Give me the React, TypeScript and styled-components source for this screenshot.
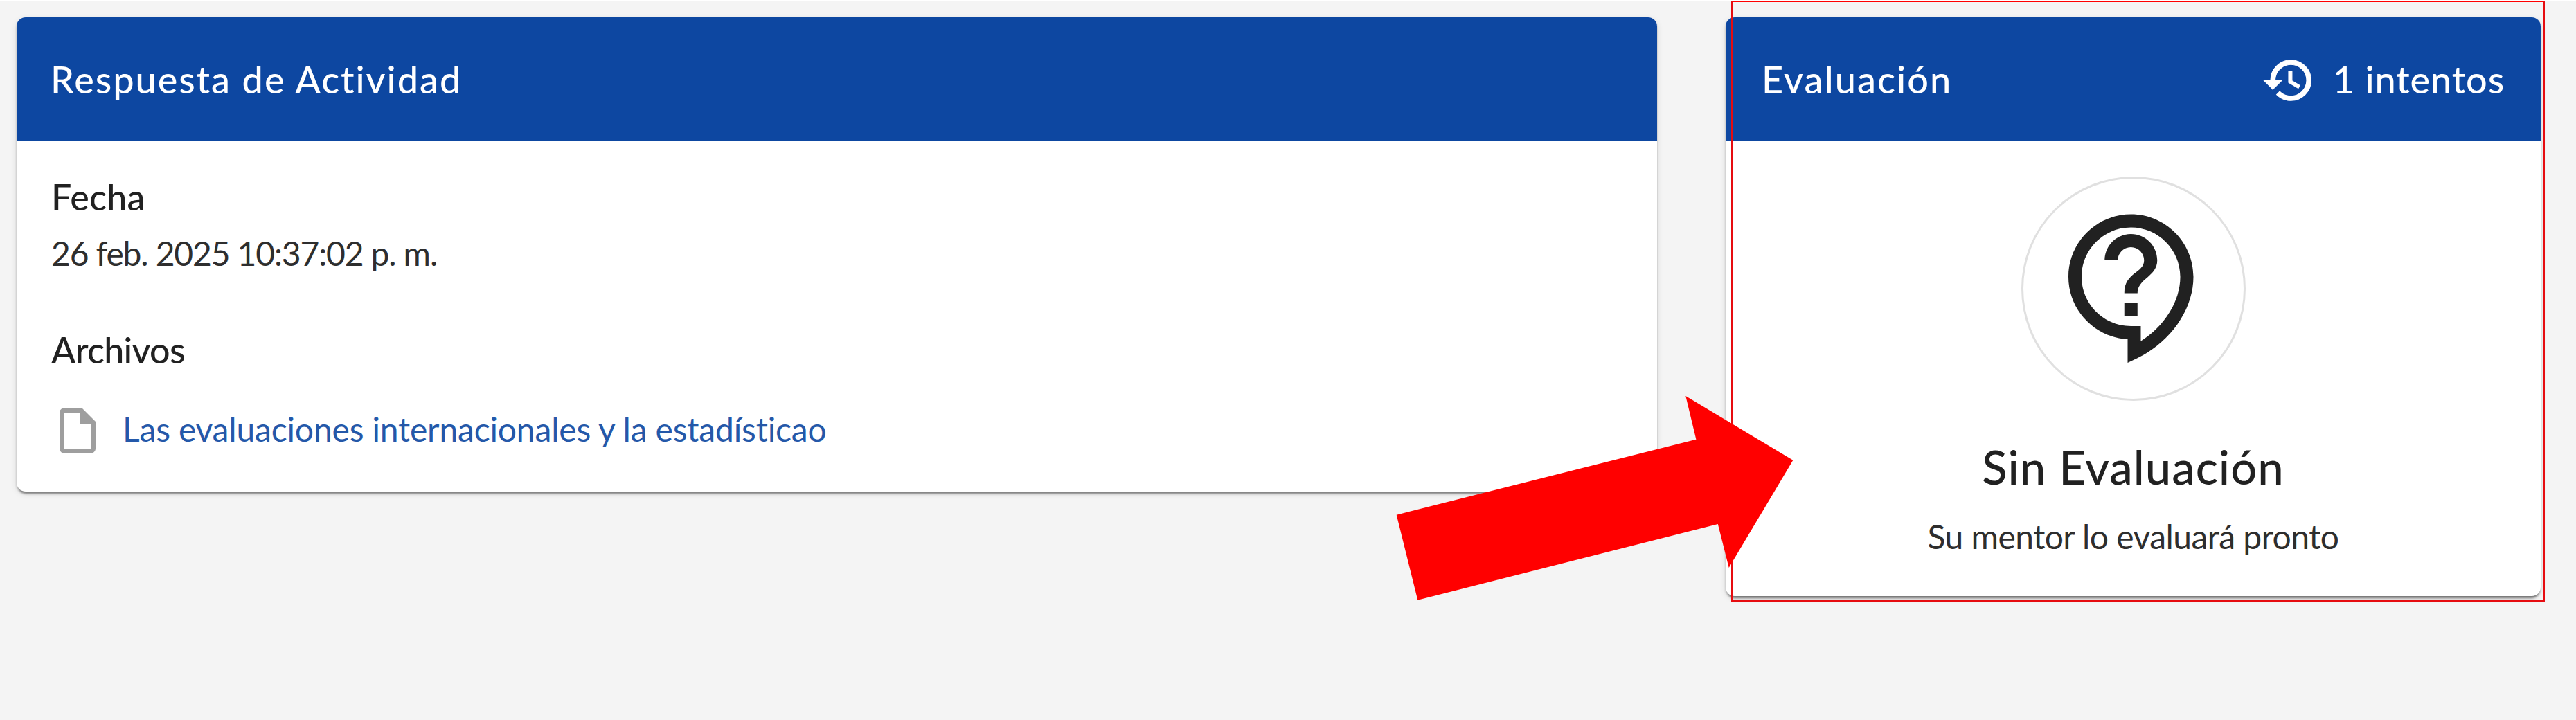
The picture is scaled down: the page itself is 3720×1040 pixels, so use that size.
import React from 'react';
import styled, { createGlobalStyle } from 'styled-components';

const GlobalStyle = createGlobalStyle`
  * { box-sizing: border-box; }
  body {
    margin: 0;
    background: #f4f4f4;
    color: #212121;
    font-family: Lato, 'Noto Sans', sans-serif;
  }
`;

const Page = styled.main`
  position: relative;
  display: flex;
  align-items: flex-start;
  gap: 99px;
  width: 3720px;
  height: 1040px;
  padding: 24px 51px 0 24px;
  border-top: 1px solid #fff;
  overflow: hidden;
`;

const Card = styled.section<{ $width: number }>`
  flex: none;
  width: ${p => p.$width}px;
  border-radius: 13px;
  background: #fff;
  box-shadow: 0 6px 3px -3px rgba(0, 0, 0, 0.3), 0 3px 3px rgba(0, 0, 0, 0.22),
    0 3px 10px rgba(0, 0, 0, 0.12);
`;

const CardHeader = styled.header<{ $inset: number }>`
  display: flex;
  align-items: center;
  justify-content: space-between;
  height: 178px;
  padding: 0 ${p => p.$inset}px;
  border-radius: 13px 13px 0 0;
  background: #0d47a1;
  color: #fff;
`;

const HeaderTitle = styled.h2<{ $spacing: number }>`
  margin: 0;
  padding-top: 2px;
  font-size: 54px;
  font-weight: 500;
  line-height: 64px;
  letter-spacing: ${p => p.$spacing}px;
  white-space: nowrap;
`;

const Attempts = styled.div`
  display: flex;
  align-items: center;
  gap: 25px;
`;

const AnswerBody = styled.div`
  padding: 49px 49px 49px;
`;

const Label = styled.h3<{ $spacing: number }>`
  margin: 0 0 0 1px;
  font-size: 52px;
  font-weight: 500;
  line-height: 64px;
  letter-spacing: ${p => p.$spacing}px;
`;

const DateText = styled.p`
  margin: 18px 0 75px 1px;
  color: #2e2e2e;
  font-size: 48px;
  line-height: 64px;
  letter-spacing: -1.15px;
`;

const FileRow = styled.div`
  display: flex;
  align-items: center;
  gap: 26px;
  margin-top: 46px;
`;

const FileLink = styled.a`
  margin-bottom: 4px;
  color: #2458a9;
  font-size: 48px;
  line-height: 64px;
  letter-spacing: -0.17px;
  text-decoration: none;
  white-space: nowrap;
`;

const StatusBody = styled.div`
  display: flex;
  flex-direction: column;
  align-items: center;
  padding: 52px 50px 54px;
`;

const StatusCircle = styled.div`
  display: flex;
  align-items: center;
  justify-content: center;
  width: 324px;
  height: 324px;
  padding: 0 0 6px 2px;
  border: 3px solid #e0e0e0;
  border-radius: 50%;
`;

const StatusTitle = styled.h1`
  margin: 55px 0 29px;
  font-size: 67px;
  font-weight: 500;
  line-height: 80px;
  letter-spacing: 1px;
`;

const StatusText = styled.p`
  margin: 0;
  color: #2e2e2e;
  font-size: 48px;
  line-height: 64px;
  letter-spacing: -0.55px;
`;

const Icon = styled.svg<{ $size: number; $color: string; $weight?: number }>`
  display: block;
  flex: none;
  width: ${p => p.$size}px;
  height: ${p => p.$size}px;
  fill: ${p => p.$color};
  stroke: ${p => p.$color};
  stroke-width: ${p => p.$weight ?? 0};
`;

const HistoryIcon = styled(Icon)`
  margin-top: 3px;
`;

const Highlight = styled.div`
  position: absolute;
  top: -1px;
  left: 2500px;
  width: 1175px;
  height: 869px;
  border: 3px solid #e60c10;
  border-top-color: #f00;
`;

const Arrow = styled.svg`
  position: absolute;
  top: 571px;
  left: 2016px;
  width: 574px;
  height: 296px;
  fill: #f00;
`;

export default function App() {
  return (
    <>
      <GlobalStyle />
      <Page>
        <Card $width={2369}>
          <CardHeader $inset={49}>
            <HeaderTitle $spacing={1.95}>Respuesta de Actividad</HeaderTitle>
          </CardHeader>
          <AnswerBody>
            <Label $spacing={0.2}>Fecha</Label>
            <DateText>26 feb. 2025 10:37:02 p. m.</DateText>
            <Label $spacing={-0.7}>Archivos</Label>
            <FileRow>
              <Icon $size={78} $color="#9e9e9e" viewBox="0 0 24 24">
                <path d="M14 2H6c-1.1 0-1.99.9-1.99 2L4 20c0 1.1.89 2 1.99 2H18c1.1 0 2-.9 2-2V8l-6-6zM6 20V4h7v5h5v11H6z" />
              </Icon>
              <FileLink>Las evaluaciones internacionales y la estadísticao</FileLink>
            </FileRow>
          </AnswerBody>
        </Card>

        <Card $width={1177}>
          <CardHeader $inset={52}>
            <HeaderTitle $spacing={2.1}>Evaluación</HeaderTitle>
            <Attempts>
              <HistoryIcon $size={78} $color="#fff" $weight={0.35} viewBox="0 0 24 24">
                <path d="M13 3c-4.97 0-9 4.03-9 9H1l3.89 3.89.07.14L9 12H6c0-3.87 3.13-7 7-7s7 3.13 7 7-3.13 7-7 7c-1.93 0-3.68-.79-4.94-2.06l-1.42 1.42C8.27 19.99 10.51 21 13 21c4.97 0 9-4.03 9-9s-4.03-9-9-9zm-1 5v5l4.28 2.54.72-1.21-3.5-2.08V8H12z" />
              </HistoryIcon>
              <HeaderTitle $spacing={0.9}>1 intentos</HeaderTitle>
            </Attempts>
          </CardHeader>
          <StatusBody>
            <StatusCircle>
              <Icon $size={228} $color="#212121" viewBox="0 0 24 24">
                <path d="M11 23.59v-3.6c-5.01-.26-9-4.42-9-9.49C2 5.26 6.26 1 11.5 1S21 5.26 21 10.5c0 4.95-3.44 9.93-8.57 12.4l-1.43.69zM11.5 3C7.36 3 4 6.36 4 10.5S7.36 18 11.5 18H13v2.3c3.64-2.3 6-6.08 6-9.8C19 6.36 15.64 3 11.5 3zm-1 11.5h2v2h-2v-2zm2-1.5h-2c0-3.25 3-3 3-5 0-1.1-.9-2-2-2s-2 .9-2 2h-2c0-2.21 1.79-4 4-4s4 1.79 4 4c0 2.5-3 2.75-3 5z" />
              </Icon>
            </StatusCircle>
            <StatusTitle>Sin Evaluación</StatusTitle>
            <StatusText>Su mentor lo evaluará pronto</StatusText>
          </StatusBody>
        </Card>

        <Highlight />
        <Arrow viewBox="2016 572 574 296">
          <path d="M2016.7 743.7 2449.4 634.7 2434.3 572 2589.3 664.7 2496.7 820 2480.8 757 2047.3 866.7Z" />
        </Arrow>
      </Page>
    </>
  );
}
